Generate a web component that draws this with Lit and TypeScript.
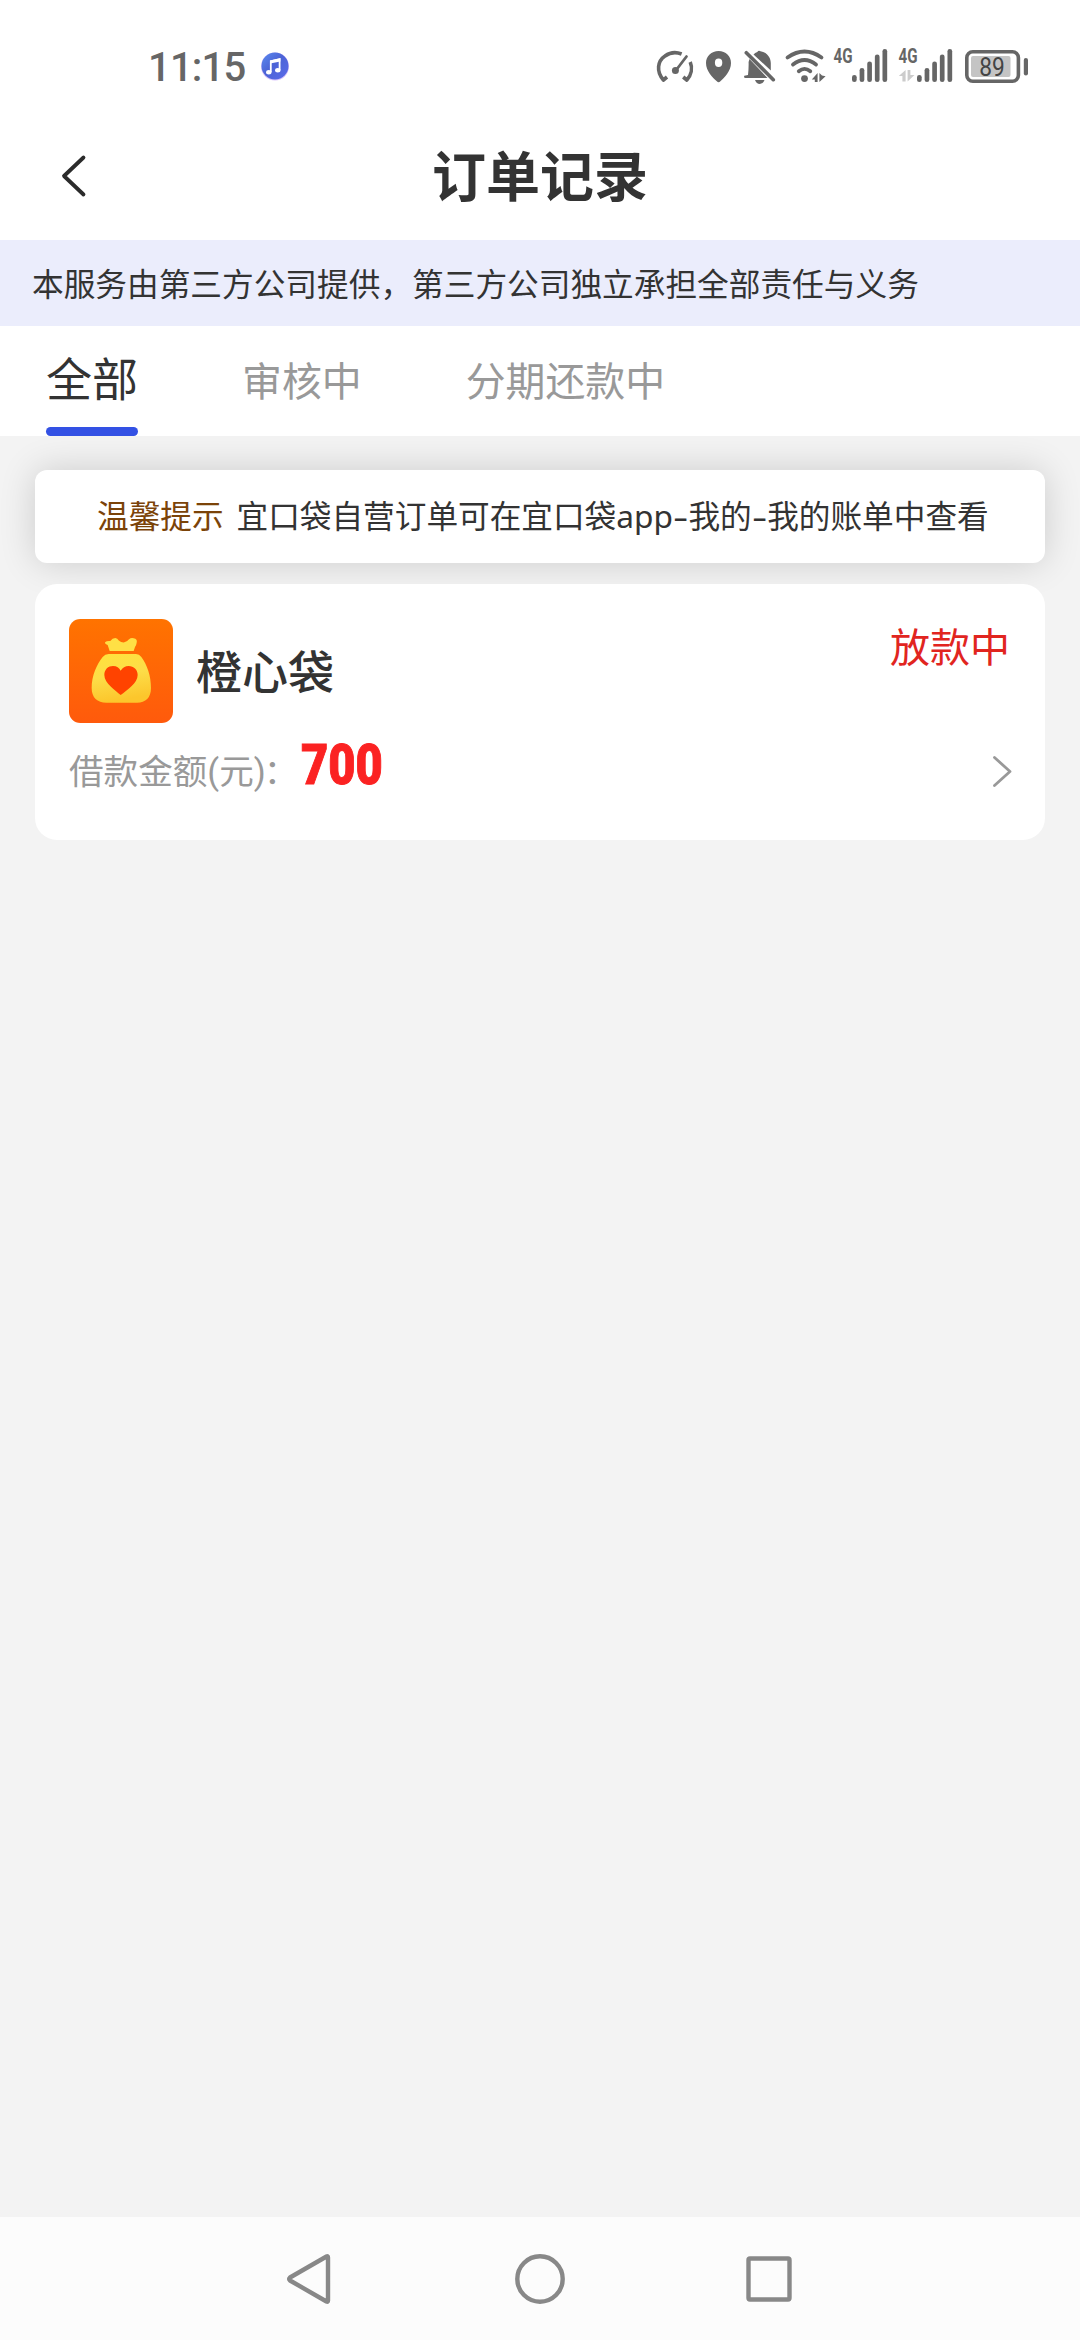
import { LitElement, html, css, svg } from "lit";
import { customElement, property } from "lit/decorators.js";

const signalHeights = [7, 14, 20.6, 27.6, 33];

@customElement("status-bar")
class StatusBar extends LitElement {
  static styles = css`
    :host {
      display: flex;
      box-sizing: border-box;
      height: 112px;
      padding: 36px 48px 0 148px;
      align-items: flex-start;
      color: #666;
    }
    .time {
      margin-top: 12px;
      font: 500 40px/40px Roboto, sans-serif;
      width: 98px;
      letter-spacing: -0.8px;
    }
    svg {
      display: block;
      flex: none;
    }
    .music {
      margin: 10px 0 0 12px;
    }
    .icons {
      display: flex;
      margin-left: auto;
    }
    text {
      font-family: Roboto, sans-serif;
    }
  `;

  bars(x: number) {
    return signalHeights.map(
      (h, i) => svg`<rect x=${x + i * 7.62} y=${82 - h} width="4.7" height=${h} rx="2.3" fill="#666"></rect>`
    );
  }

  render() {
    return html`
      <span class="time">11:15</span>
      <svg class="music" width="34" height="40" viewBox="258 46 34 40">
        <defs>
          <linearGradient id="m" x1="0" y1="0" x2="1" y2="1">
            <stop offset="0" stop-color="#5b8df0" />
            <stop offset=".45" stop-color="#4c63d6" />
            <stop offset="1" stop-color="#5a6bea" />
          </linearGradient>
        </defs>
        <circle cx="275" cy="66.5" r="14" fill="#d9c4fb" />
        <circle cx="275" cy="66" r="13.5" fill="url(#m)" />
        <path d="M270.8 72V61.2L279.6 59.2V70" fill="none" stroke="#fff" stroke-width="1.8" />
        <path d="M270 60.4L280.4 58.2V61.4L270 63.6Z" fill="#fff" />
        <ellipse cx="268.8" cy="72.2" rx="2.7" ry="2.2" fill="#fff" />
        <ellipse cx="277.8" cy="70.2" rx="2.7" ry="2.2" fill="#fff" />
      </svg>
      <div class="icons">
        <svg width="182" height="60" viewBox="650 36 182 60">
          <g fill="none" stroke="#666" stroke-width="3.6" stroke-linejoin="round">
            <path d="M667 77L663.4 80C656 71.500 657.500 61 665 56C670 52.400 676 51.800 681.600 54" />
            <path d="M690.200 62C692.800 68 691.400 75 686.800 80L683.200 77" />
            <path d="M675.800 70.500L686.500 56.500" stroke-linecap="round" stroke-width="2.800" />
          </g>
          <circle cx="675.4" cy="70.6" r="3.5" fill="#666" />
          <path fill="#666" fill-rule="evenodd"
            d="M718.600 51C725.800 51 731 56 731 63C731 71 724.500 77.500 720.400 81.300Q718.600 83 716.800 81.300C712.600 77.500 706 71 706 63C706 56 711.400 51 718.600 51ZM718.600 58.600A3.700 4.200 0 1 0 718.600 67A3.700 4.200 0 1 0 718.600 58.600Z" />
          <g fill="#666">
            <path d="M753.500 54.500Q755 52.600 757.300 52Q758.500 50 760.500 51.200C766 52 770.800 57 770.800 63V70.500Z" />
            <path d="M749.500 59L767.500 78H745.500Q743.500 78 744.300 75.800L748 75Q748.800 68 748.600 62Z" />
            <path d="M755 80H764.500Q763 84 759.800 84Q756.500 84 755 80Z" />
            <path d="M746.300 52.700L773.300 79.700" stroke="#666" stroke-width="3.600" stroke-linecap="round" />
          </g>
          <g fill="none" stroke="#666" stroke-width="3.800" stroke-linecap="round">
            <path d="M787.500 57.500Q804.500 45.500 821.500 57.500" />
            <path d="M793 64.500Q804.500 55.500 816 64.500" />
            <path d="M798.800 71.300Q804.500 66.500 810.300 71.300" />
          </g>
          <circle cx="804.500" cy="78.600" r="3.400" fill="#666" />
          <path fill="#666" d="M817.600 73V82H814.800V79.400H811.800ZM819.400 82V73L822 75.500L825.600 76.300Z" />
        </svg>
        <svg width="200" height="60" viewBox="832 36 200 60">
          <text x="833.600" y="63.4" font-size="20.500" font-weight="700" fill="#666" textLength="19" lengthAdjust="spacingAndGlyphs">4G</text>
          ${this.bars(852)}
          <text x="898.600" y="63.4" font-size="20.500" font-weight="700" fill="#666" textLength="19" lengthAdjust="spacingAndGlyphs">4G</text>
          <path fill="#ccc" d="M905.600 70V81.500H902.400V76H898.800ZM907.600 81.500V70H910.400V75H914.500Z" />
          ${this.bars(917)}
          <rect x="966.8" y="51.800" width="51.600" height="29.400" rx="6" fill="none" stroke="#666" stroke-width="3.600" />
          <rect x="971" y="56" width="39.500" height="21" rx="2" fill="#c4c4c4" />
          <rect x="1023.800" y="58" width="4.200" height="17.500" rx="2.100" fill="#666" />
          <text x="979.200" y="75.700" font-size="25" fill="#444" textLength="25.500" lengthAdjust="spacingAndGlyphs">89</text>
        </svg>
      </div>
    `;
  }
}

@customElement("order-card")
class OrderCard extends LitElement {
  @property() name = "";
  @property() status = "";
  @property() amount = "";

  static styles = css`
    :host {
      display: flex;
      flex-direction: column;
      box-sizing: border-box;
      position: relative;
      height: 256px;
      padding: 35px 34px 0;
      border-radius: 22px;
      background: #fff;
      color: #333;
    }
    svg {
      display: block;
      flex: none;
    }
    .top,
    .bottom {
      display: flex;
    }
    .name {
      margin: 25px 0 0 23px;
      font-size: 46px;
      line-height: 50px;
      font-weight: 500;
    }
    .status {
      margin: 0 1px 0 auto;
      font-size: 40px;
      line-height: 52px;
      color: #e1251f;
    }
    .bottom {
      height: 66px;
      margin-top: 16px;
    }
    .label {
      margin-top: 7px;
      width: 232px;
      font-size: 34.6px;
      line-height: 46px;
      color: #999;
      white-space: nowrap;
    }
    .paren {
      font-family: Roboto, sans-serif;
    }
    .colon {
      margin-left: -2px;
    }
    .amount {
      margin-top: -2px;
      height: 56px;
      font: 900 56px/56px Roboto, sans-serif;
      color: #fb2222;
      -webkit-text-stroke: 1px #fb2222;
      transform: scaleX(0.84);
      transform-origin: 0 0;
    }
    .arrow {
      margin: 14px -2px 0 auto;
    }
  `;

  render() {
    return html`
      <div class="top">
        <svg width="104" height="104" viewBox="0 0 312 312">
          <defs>
            <linearGradient id="bg" x1="0" y1="0" x2="0" y2="1">
              <stop offset="0" stop-color="#ff7300" />
              <stop offset="1" stop-color="#ff5a0c" />
            </linearGradient>
            <linearGradient id="bag" x1="0" y1="0" x2="0.2" y2="1">
              <stop offset="0" stop-color="#ffe23c" />
              <stop offset=".5" stop-color="#fddd48" />
              <stop offset="1" stop-color="#fcc62c" />
            </linearGradient>
          </defs>
          <rect width="312" height="312" rx="34" fill="url(#bg)" />
          <path fill="#ffe045"
            d="M122 96L116 78Q105 73 109 69Q113 65 124 66Q130 57 139 57Q145 58 150 65Q157 71 166 70Q174 69 180 61Q187 55 194 58Q206 60 203 71Q202 79 198 84L194 96Z" />
          <path fill="url(#bag)"
            d="M119 105H201Q211 105 217 114C234 137 246 170 246 207C246 236 230 251 204 251H112C85 251 68 236 68 207C68 170 83 137 101 114Q108 105 119 105Z" />
          <path fill="#ff4300"
            d="M155 228C139 214 106 193 106 168C106 151 118 141 132 141C143 141 151 146 155 155C160 146 169 141 179 141C194 141 206 152 206 168C206 193 173 214 155 228Z" />
        </svg>
        <span class="name">${this.name}</span>
        <span class="status">${this.status}</span>
      </div>
      <div class="bottom">
        <span class="label">借款金额<span class="paren">(</span>元<span class="paren">)</span><span class="colon">：</span></span>
        <span class="amount">${this.amount}</span>
        <svg class="arrow" width="22" height="36" viewBox="991 752 22 36">
          <path d="M994.500 756.500L1010 770.500L994.500 784.500" fill="none" stroke="#999" stroke-width="2.800" stroke-linecap="round" stroke-linejoin="round" />
        </svg>
      </div>
    `;
  }
}

@customElement("app-root")
class AppRoot extends LitElement {
  static styles = css`
    :host {
      display: flex;
      flex-direction: column;
      width: 1080px;
      height: 2340px;
      overflow: hidden;
      background: #f3f3f3;
      color: #333;
      font-family: "Noto Sans CJK SC", sans-serif;
    }
    svg {
      display: block;
    }
    .head {
      background: #fff;
      height: 240px;
    }
    .title-row {
      display: grid;
      grid-template-columns: 120px 1fr 120px;
      align-items: center;
      height: 128px;
    }
    .back {
      margin-left: 58px;
    }
    .title {
      padding-bottom: 4px;
      font-size: 54px;
      line-height: 60px;
      font-weight: 700;
      text-align: center;
    }
    .notice {
      height: 86px;
      padding-left: 32px;
      background: #ebedfc;
      font-size: 31.68px;
      line-height: 84px;
      white-space: nowrap;
    }
    .tabs {
      display: flex;
      gap: 104px;
      height: 110px;
      padding-left: 46px;
      background: #fff;
      font-size: 39.9px;
      line-height: 106px;
      color: #999;
    }
    .tab {
      display: flex;
      flex-direction: column;
      justify-content: space-between;
      height: 110px;
    }
    .active {
      font-size: 46px;
      line-height: 101px;
      color: #333;
    }
    .label {
      height: 101px;
    }
    .line {
      height: 9px;
      border-radius: 4.5px;
      background: #3351e4;
    }
    .content {
      flex: 1;
      display: flex;
      flex-direction: column;
      gap: 21px;
      padding: 34px 35px;
      overflow: hidden;
    }
    .tip {
      display: flex;
      height: 93px;
      padding-left: 62px;
      border-radius: 12px;
      background: #fff;
      box-shadow: 0 0 36px rgba(0, 0, 0, 0.16);
      font-size: 31.65px;
      line-height: 88px;
      white-space: nowrap;
    }
    .hint {
      color: #7b4308;
      margin-right: 13px;
    }
    .latin {
      font-family: "Noto Sans", sans-serif;
    }
    .dash {
      display: inline-block;
      width: 15.5px;
      text-align: center;
      transform: scaleX(1.5);
    }
    .nav {
      display: flex;
      justify-content: center;
      align-items: center;
      gap: 169px;
      height: 123px;
      background: #fcfcfc;
    }
    .nav svg {
      fill: none;
      stroke: #888;
      stroke-width: 4.4;
      stroke-linejoin: round;
    }
  `;

  render() {
    return html`
      <div class="head">
        <status-bar></status-bar>
        <div class="title-row">
          <svg class="back" width="32" height="48" viewBox="58 151 32 48">
            <path d="M83.500 156.500L64 175L83.500 193.500" fill="none" stroke="#2b2b2b" stroke-width="3.800" stroke-linecap="round" stroke-linejoin="round" />
          </svg>
          <span class="title">订单记录</span>
        </div>
      </div>
      <div class="notice">本服务由第三方公司提供，第三方公司独立承担全部责任与义务</div>
      <div class="tabs">
        <div class="tab active">
          <span class="label">全部</span>
          <span class="line"></span>
        </div>
        <div class="tab">审核中</div>
        <div class="tab">分期还款中</div>
      </div>
      <div class="content">
        <div class="tip">
          <span class="hint">温馨提示</span>
          <span>宜口袋自营订单可在宜口袋<span class="latin">app<span class="dash">-</span></span>我的<span class="latin dash">-</span>我的账单中查看</span>
        </div>
        <order-card name="橙心袋" status="放款中" amount="700"></order-card>
      </div>
      <div class="nav">
        <svg width="60" height="60" viewBox="281 2249 60 60">
          <path d="M326.500 2256.500Q328 2255.800 328 2257.500V2300.500Q328 2302.200 326.500 2301.500L290 2280.500Q288.500 2279 290 2277.500Z" />
        </svg>
        <svg width="60" height="60" viewBox="510 2249 60 60"><circle cx="540" cy="2279" r="22.700" /></svg>
        <svg width="60" height="60" viewBox="739 2249 60 60"><rect x="748.500" y="2258.500" width="41" height="41" rx="1.500" /></svg>
      </div>
    `;
  }
}
